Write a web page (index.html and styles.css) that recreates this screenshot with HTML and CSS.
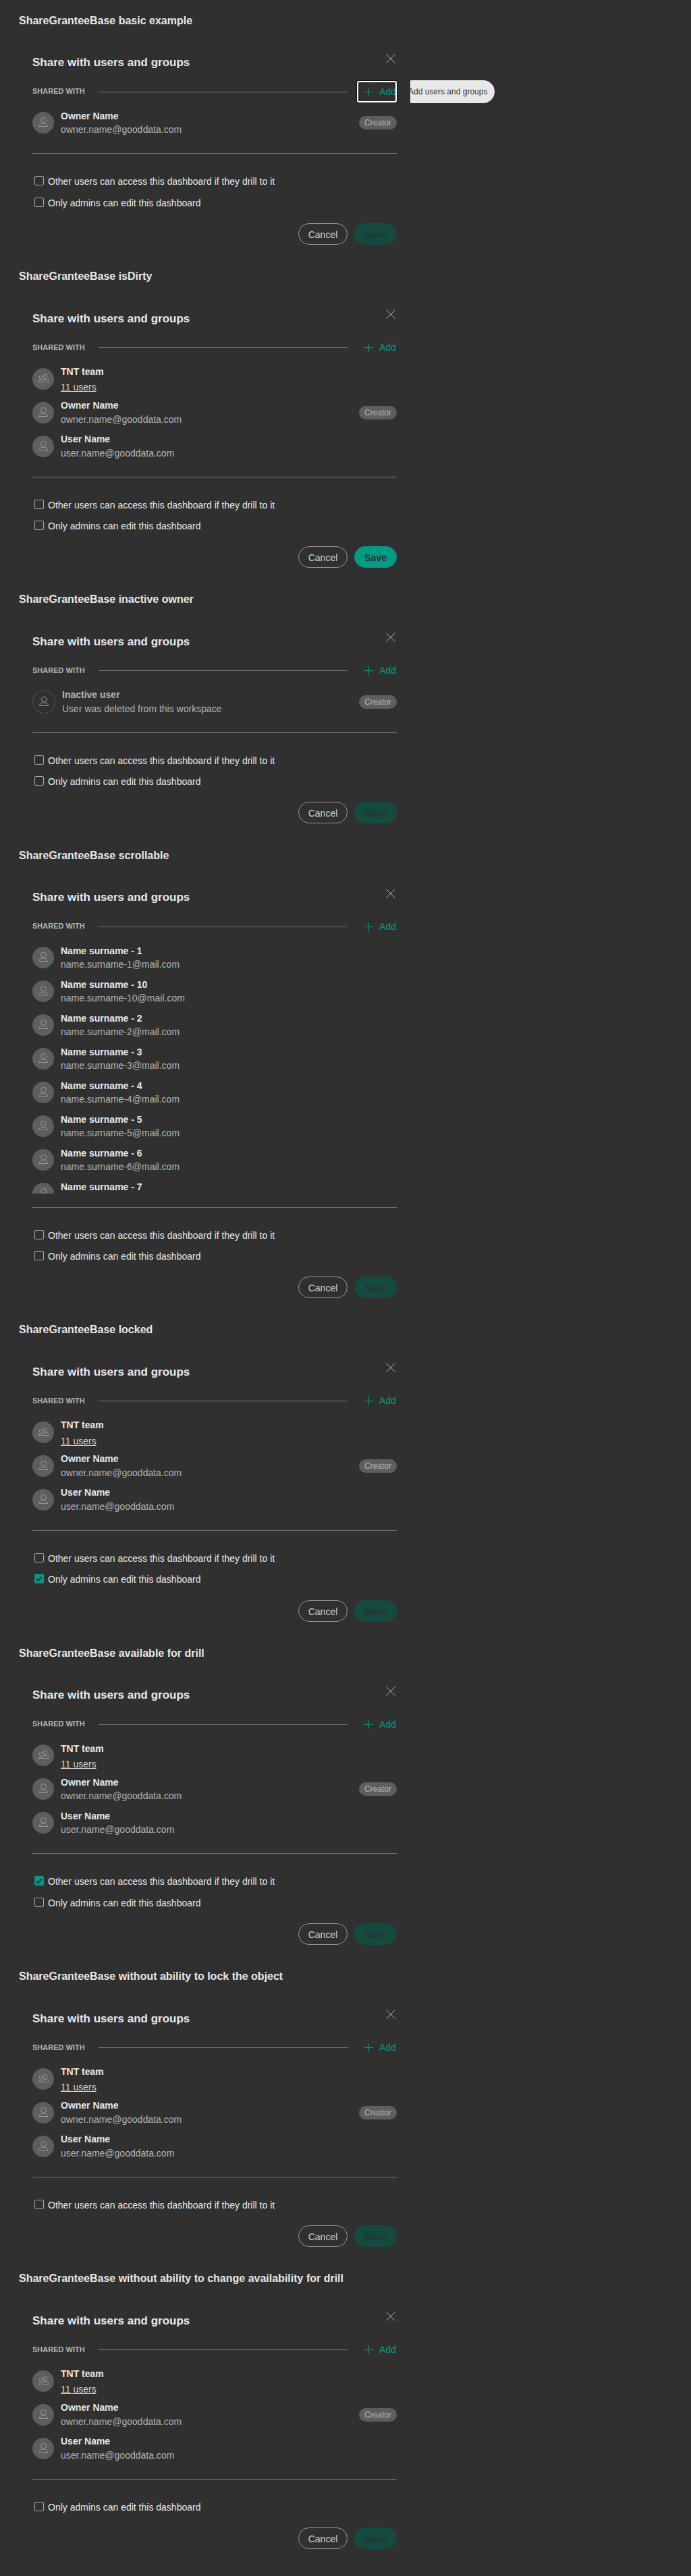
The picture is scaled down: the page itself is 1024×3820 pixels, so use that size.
FILE: index.html
```html
<!DOCTYPE html>
<html lang="en">
<head>
<meta charset="utf-8">
<title>ShareGranteeBase</title>
<link rel="stylesheet" href="styles.css">
</head>
<body>
<svg class="sprite" aria-hidden="true">
  <symbol id="close" viewBox="0 0 14 14"><path d="M.4.4 13.6 13.6M13.6.4.4 13.6"/></symbol>
  <symbol id="user" viewBox="0 0 14 14"><circle cx="7.5" cy="4.2" r="3.9"/><path d="M.5 13.5C.5 10.8 3 9.2 7 9.2s6.5 1.6 6.5 4.3Z"/></symbol>
  <symbol id="group" viewBox="0 0 17 12"><circle cx="4.5" cy="4.6" r="2.3"/><circle cx="11" cy="3.2" r="2.8"/><path d="M5.5 11.5C5.5 9 7.5 7.5 11 7.5s5.5 1.5 5.5 4Z"/><path d="M6.3 8.8C3 8 .5 9.3.5 11.5H4"/></symbol>
  <symbol id="check" viewBox="0 0 14 14"><path d="M3 7.3 5.6 10 10.8 4.2"/></symbol>
</svg>
<main id="stories"></main>
<script src="stories.js"></script>
</body>
</html>
```
FILE: styles.css
```css
* { box-sizing: border-box; }
body {
  margin: 0;
  background: #303030;
  color: #e8e8e8;
  font: 14px/20px "Liberation Sans", Arial, sans-serif;
}
.sprite { position: absolute; width: 0; height: 0; }
svg { fill: none; stroke: currentColor; }
.story { padding: 21.6px 0 16.6px 28px; }
.story-title { margin: 0; height: 41px; font-size: 16px; line-height: 17px; font-weight: 700; }
.dialog { position: relative; width: 580px; padding: 17px 20px 0; }
.dialog-header { display: flex; justify-content: space-between; height: 43px; }
.dialog-title { margin: 0; padding-top: 3.6px; font-size: 17px; line-height: 19px; font-weight: 700; }
.icon-close { width: 14px; height: 14px; margin-right: 2px; color: #b0b0b0; }
.shared-header { display: flex; align-items: center; height: 27px; }
.shared-label { width: 98px; padding-bottom: 1.8px; font-size: 11px; line-height: 12px; font-weight: 700; color: #b4b4b4; }
.shared-rule { width: 369px; height: 1px; background: #757575; }
.add { position: relative; display: flex; align-items: center; margin-left: auto; width: 48px; height: 30px; gap: 9px; color: #009b85; }
.add-text { line-height: 16px; margin-bottom: 1px; }
.icon-plus {
  width: 13px;
  height: 13px;
  flex: none;
  background:
    linear-gradient(#009b85, #009b85) 0 6px / 13px 1px no-repeat,
    linear-gradient(#009b85, #009b85) 6px 0 / 1px 13px no-repeat;
}
.add.focused::after {
  content: "";
  position: absolute;
  inset: -1px 0 -1px -11px;
  border: 2px solid #fff;
  border-radius: 3px;
  box-shadow: 0 0 0 1px #101010;
}
.tooltip-clip { position: absolute; left: 580px; top: 56.6px; width: 416px; height: 34px; overflow: hidden; }
.tooltip { width: 139px; height: 34px; margin-left: -14px; padding: 7px 11px; border-radius: 17px; background: #e8e8e8; color: #303030; font-size: 12px; white-space: nowrap; }
.list { margin-top: 7.6px; overflow: hidden; }
.list.scroll { height: 374.4px; }
.grantee { display: flex; align-items: center; height: 50px; }
.avatar { display: flex; align-items: center; justify-content: center; width: 32px; height: 32px; margin-right: 10px; border-radius: 50%; background: #5e5e5e; color: #989898; }
.icon-user { width: 14px; height: 14px; margin: -2px 0 0; }
.icon-group { width: 17px; height: 12px; margin: -2px 0 0 1px; }
.who { flex: 1; }
.name { height: 20.6px; font-weight: 700; }
.detail { height: 20.6px; color: #b4b4b4; }
.link { color: #d0d0d0; text-decoration: underline; padding-top: 2.5px; }
.inactive .avatar { width: 34px; height: 34px; background: none; border: 1px dashed #6a6a6a; }
.inactive .name { color: #b4b4b4; }
.badge { height: 20px; padding: 0 8px; border-radius: 10px; background: #5e5e5e; color: #b4b4b4; font-size: 12px; line-height: 20px; }
.divider { height: 1px; margin: 20px 0 24.3px; background: #757575; }
.option { display: flex; align-items: center; height: 31.4px; padding-left: 3px; }
.box { width: 14px; height: 14px; margin-right: 6px; border: 1px solid #a8a8a8; border-radius: 2px; }
.box.checked { border: 0; background: #009b85; color: #303030; }
.icon-check { display: block; width: 14px; height: 14px; stroke-width: 2.4; }
.option-text { line-height: 16px; padding-top: 2px; }
.actions { display: flex; justify-content: flex-end; gap: 10px; margin-top: 15.5px; }
.button { height: 32px; padding: 6px 14px; border: 1px solid #949494; border-radius: 16px; color: #d0d0d0; }
.button.save { border-color: #009b85; background: #009b85; color: #303030; font-weight: 700; }
.button.save.disabled { border-color: #144a40; background: #144a40; color: #26352f; }
```
FILE: stories.js
```js
const icon = (name) => `<svg class="icon-${name}"><use href="#${name}"/></svg>`;

const team = { icon: "group", name: "TNT team", detail: "11 users", link: true };
const owner = { name: "Owner Name", detail: "owner.name@gooddata.com", creator: true };
const user = { name: "User Name", detail: "user.name@gooddata.com" };
const inactive = { name: "Inactive user", detail: "User was deleted from this workspace", creator: true, inactive: true };
const many = [1, 10, 2, 3, 4, 5, 6, 7].map((n) => ({ name: `Name surname - ${n}`, detail: `name.surname-${n}@mail.com` }));

const DRILL = "Other users can access this dashboard if they drill to it";
const LOCK = "Only admins can edit this dashboard";

const stories = [
  { title: "basic example", rows: [owner], focused: true },
  { title: "isDirty", rows: [team, owner, user], dirty: true },
  { title: "inactive owner", rows: [inactive] },
  { title: "scrollable", rows: many, scroll: true },
  { title: "locked", rows: [team, owner, user], checked: LOCK },
  { title: "available for drill", rows: [team, owner, user], checked: DRILL },
  { title: "without ability to lock the object", rows: [team, owner, user], options: [DRILL] },
  { title: "without ability to change availability for drill", rows: [team, owner, user], options: [LOCK] },
];

const grantee = (g) => `
  <div class="grantee ${g.inactive ? "inactive" : ""}">
    <div class="avatar">${icon(g.icon || "user")}</div>
    <div class="who"><div class="name">${g.name}</div><div class="detail ${g.link ? "link" : ""}">${g.detail}</div></div>
    ${g.creator ? '<div class="badge">Creator</div>' : ""}
  </div>`;

const option = (text, checked) => `
  <div class="option">
    <span class="box ${checked ? "checked" : ""}">${checked ? icon("check") : ""}</span>
    <span class="option-text">${text}</span>
  </div>`;

const story = (s) => `
  <section class="story">
    <h4 class="story-title">ShareGranteeBase ${s.title}</h4>
    <div class="dialog">
      <div class="dialog-header"><h3 class="dialog-title">Share with users and groups</h3>${icon("close")}</div>
      <div class="shared-header">
        <span class="shared-label">SHARED WITH</span><span class="shared-rule"></span>
        <span class="add ${s.focused ? "focused" : ""}"><i class="icon-plus"></i><span class="add-text">Add</span></span>
      </div>
      ${s.focused ? '<div class="tooltip-clip"><div class="tooltip">Add users and groups</div></div>' : ""}
      <div class="list ${s.scroll ? "scroll" : ""}">${s.rows.map(grantee).join("")}</div>
      <div class="divider"></div>
      ${(s.options || [DRILL, LOCK]).map((t) => option(t, t === s.checked)).join("")}
      <div class="actions"><span class="button">Cancel</span><span class="button save ${s.dirty ? "" : "disabled"}">Save</span></div>
    </div>
  </section>`;

document.getElementById("stories").innerHTML = stories.map(story).join("");
```
